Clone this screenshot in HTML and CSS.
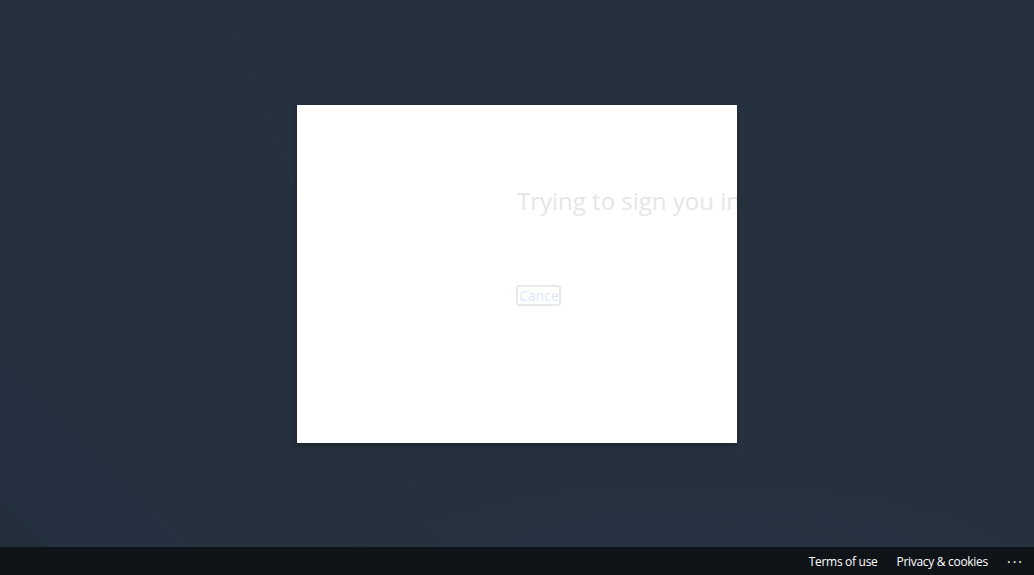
FILE: index.html
```html
<!DOCTYPE html>
<html lang="en">
<head>
<meta charset="utf-8">
<title>Sign in</title>
<link rel="stylesheet" href="styles.css">
</head>
<body>
<div class="page">
  <main class="stage">
    <section class="card">
      <div class="card-inner">
        <h1 class="title">Trying to sign you in</h1>
        <button class="cancel" type="button">Cancel</button>
      </div>
    </section>
  </main>
  <footer class="footer">
    <a class="foot-link" href="#">Terms of use</a>
    <a class="foot-link" href="#">Privacy &amp; cookies</a>
    <span class="more">&middot;&middot;&middot;</span>
  </footer>
</div>
</body>
</html>
```

FILE: styles.css
```css
html, body {
  margin: 0;
  padding: 0;
  height: 100%;
}
body {
  font-family: "Open Sans", "Noto Sans", "Liberation Sans", sans-serif;
  background: #25303d;
  overflow: hidden;
}
.page {
  height: 100%;
  display: flex;
  flex-direction: column;
}
.stage {
  flex: 1;
  display: flex;
  align-items: center;
  justify-content: center;
  background:
    linear-gradient(225deg, rgba(0,0,0,0) 0, rgba(0,0,0,0) 88%, rgba(37,50,66,0.7) 88%, rgba(37,50,66,0.7) 97%, rgba(36,44,56,0.4) 97%),
    radial-gradient(ellipse 360px 90px at 700px 560px, rgba(38,51,67,0.6) 0, rgba(38,51,67,0) 100%),
    linear-gradient(68.5deg, rgba(0,0,0,0) 0, rgba(0,0,0,0) 34.8%, rgba(39,52,68,0.4) 34.8%, rgba(39,52,68,0.4) 100%),
    #25303d;
}
.card {
  width: 440px;
  height: 338px;
  background: #ffffff;
  overflow: hidden;
  box-shadow: 0 2px 6px rgba(0,0,0,0.28);
  margin-top: 1px;
}
.card-inner {
  padding: 80px 0 0 220px;
  display: flex;
  flex-direction: column;
  align-items: flex-start;
}
.title {
  margin: 0;
  font-size: 24px;
  font-weight: 400;
  line-height: 32px;
  color: #e6e6e6;
  white-space: nowrap;
}
.cancel {
  margin-top: 68px;
  margin-left: -1px;
  width: 45px;
  height: 21px;
  padding: 0 0 0 1px;
  border: 2px solid #e9e9e9;
  border-radius: 3px;
  background: #ffffff;
  color: #dce8f5;
  font-family: inherit;
  font-size: 14px;
  line-height: 17px;
  text-align: left;
  overflow: hidden;
  white-space: nowrap;
}
.footer {
  height: 28px;
  background: #101419;
  display: flex;
  align-items: center;
  justify-content: flex-end;
  padding-right: 12px;
  gap: 19px;
}
.foot-link {
  color: #ffffff;
  text-decoration: none;
  font-size: 12px;
  letter-spacing: -0.3px;
}
.more {
  color: #ffffff;
  font-size: 14px;
  letter-spacing: 2px;
  margin-right: -2px;
}
```
